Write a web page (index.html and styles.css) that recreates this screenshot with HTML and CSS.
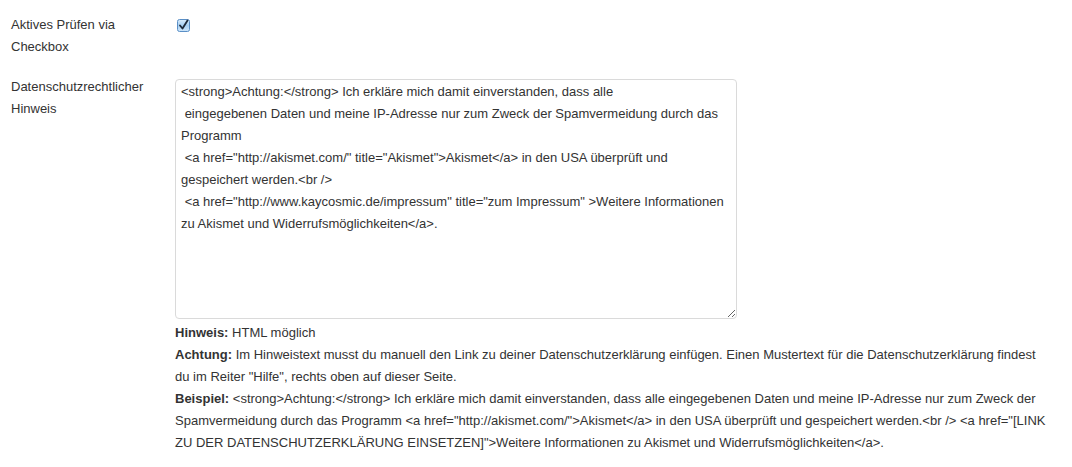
FILE: index.html
```html
<!DOCTYPE html>
<html lang="de">
<head>
<meta charset="utf-8">
<title>Einstellungen</title>
<link rel="stylesheet" href="styles.css">
</head>
<body>
<div class="form">
  <div class="row row-check">
    <label class="label" for="cb">Aktives Prüfen via Checkbox</label>
    <div class="field">
      <span class="checkbox" id="cb" role="checkbox" aria-checked="true">
        <svg width="13" height="13" viewBox="0 0 13 13">
          <defs>
            <linearGradient id="g" x1="0" y1="0" x2="0" y2="1">
              <stop offset="0" stop-color="#d9ecfb"/>
              <stop offset="0.5" stop-color="#a9d1f3"/>
              <stop offset="1" stop-color="#cfe6fa"/>
            </linearGradient>
          </defs>
          <rect x="0.5" y="0.5" width="12" height="12" rx="2" fill="url(#g)" stroke="#5a8fc6"/>
          <path d="M3 6.5 L5.5 9.5 L10.5 1.5" fill="none" stroke="#1e2a3a" stroke-width="1.8" stroke-linecap="round" stroke-linejoin="round"/>
        </svg>
      </span>
    </div>
  </div>
  <div class="row row-text">
    <label class="label" for="ta">Datenschutzrechtlicher Hinweis</label>
    <div class="field">
<textarea id="ta" class="textarea" spellcheck="false"><strong>Achtung:</strong> Ich erkläre mich damit einverstanden, dass alle
 eingegebenen Daten und meine IP-Adresse nur zum Zweck der Spamvermeidung durch das Programm
 <a href="http://akismet.com/" title="Akismet">Akismet</a> in den USA überprüft und gespeichert werden.<br />
 <a href="http://www.kaycosmic.de/impressum" title="zum Impressum" >Weitere Informationen zu Akismet und Widerrufsmöglichkeiten</a>.</textarea>
      <div class="help">
        <p><b class="key">Hinweis:</b> HTML möglich</p>
        <p><b class="key">Achtung:</b> Im Hinweistext musst du manuell den Link zu deiner Datenschutzerklärung einfügen. Einen Mustertext für die Datenschutzerklärung findest du im Reiter "Hilfe", rechts oben auf dieser Seite.</p>
        <p><b class="key">Beispiel:</b> &lt;strong&gt;Achtung:&lt;/strong&gt; Ich erkläre mich damit einverstanden, dass alle eingegebenen Daten und meine IP-Adresse nur zum Zweck der Spamvermeidung durch das Programm &lt;a href="http://akismet.com/"&gt;Akismet&lt;/a&gt; in den USA überprüft und gespeichert werden.&lt;br /&gt; &lt;a href="[LINK ZU DER DATENSCHUTZERKLÄRUNG EINSETZEN]"&gt;Weitere Informationen zu Akismet und Widerrufsmöglichkeiten&lt;/a&gt;.</p>
      </div>
    </div>
  </div>
</div>
</body>
</html>
```
FILE: styles.css
```css
html, body {
  margin: 0;
  padding: 0;
  background: #fff;
}
body {
  font-family: "Liberation Sans", Helvetica, Arial, sans-serif;
  font-size: 13px;
  line-height: 22px;
  color: #333;
}
.form {
  display: flex;
  flex-direction: column;
  gap: 18px;
  padding: 14px 0 0 11px;
}
.row {
  display: grid;
  grid-template-columns: 164px 1fr;
}
.label {
  width: 120px;
}
.field {
  min-width: 0;
}
.checkbox {
  display: block;
  width: 13px;
  height: 13px;
  margin: 5px 0 0 2px;
}
.checkbox svg {
  display: block;
}
.textarea {
  display: block;
  box-sizing: border-box;
  width: 562px;
  height: 240px;
  margin: 3px 0 3px 0;
  padding: 1px 5px;
  border: 1px solid #dadada;
  border-radius: 4px;
  font-family: inherit;
  font-size: 13px;
  line-height: 22px;
  color: #333;
  resize: vertical;
  outline: none;
  overflow: hidden;
}
.help {
  width: 876px;
}
.help p {
  margin: 0;
}
.key {
  font-weight: bold;
}
```
